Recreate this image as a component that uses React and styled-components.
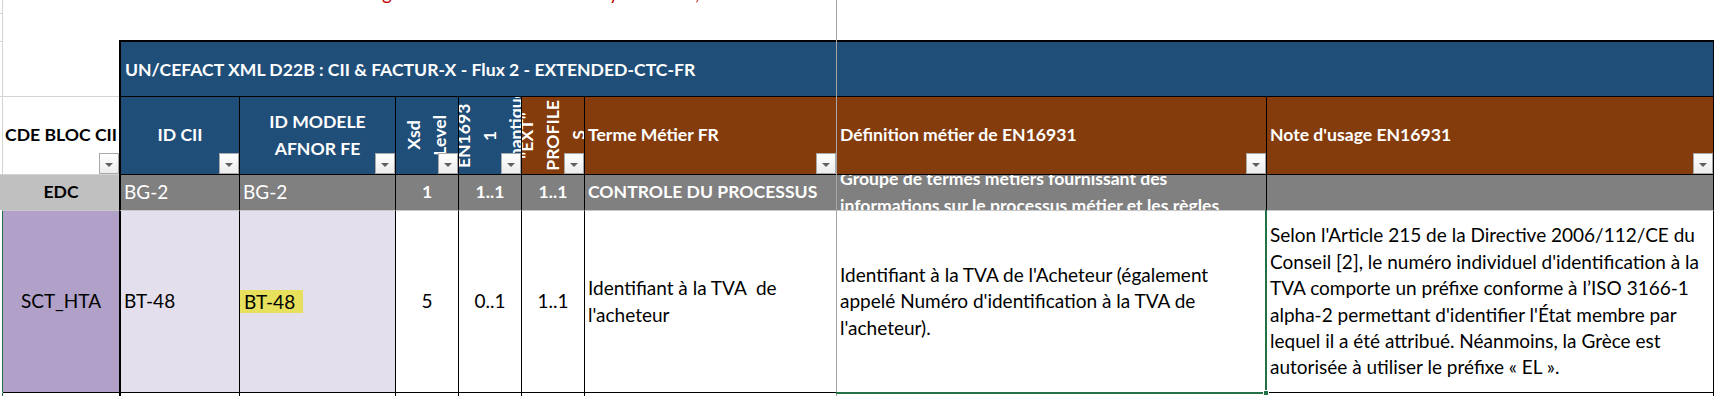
import React from 'react';
import styled, { createGlobalStyle } from 'styled-components';

const FONT = 'Lato, "Liberation Sans", sans-serif';
const BLUE = '#1f4e78';
const BROWN = '#843c0c';
const GREY = '#808080';
const LIGHTGREY = '#c0c0c0';
const LAVENDER = '#e4dfec';
const PURPLE = '#b1a0c7';
const XLGREEN = '#217346';
const REG = '19px';
const BOLD = '17.6px';

const GlobalStyle = createGlobalStyle`
  html, body { margin: 0; padding: 0; background: #fff; }
  body { font-family: ${FONT}; }
  *, *::before, *::after { box-sizing: border-box; }
`;

const Sheet = styled.div`
  position: relative;
  width: 1714px;
  height: 396px;
  overflow: hidden;
  display: grid;
  grid-template-columns: 3px 116px 120px 156px 63px 63px 63px 252px 430px 448px;
  grid-template-rows: 40px 56px 78px 36px 182px 4px;
  font-family: ${FONT};
  font-size: ${REG};
  color: #000;
`;

const Gutter = styled.div`
  grid-row: span 3;
  border-right: 1px solid #d4d4d4;
  background:
    linear-gradient(#d4d4d4, #d4d4d4) 0 13px / 100% 1px no-repeat,
    linear-gradient(#d4d4d4, #d4d4d4) 0 41px / 100% 1px no-repeat,
    linear-gradient(#d4d4d4, #d4d4d4) 0 96px / 100% 1px no-repeat;
`;

const GutterCell = styled.div`
  background: ${p => p.$bg || '#fff'};
  border-top: 1px solid ${p => p.$top || 'transparent'};
  border-right: 1px solid ${p => p.$line || 'transparent'};
`;

const TopStrip = styled.div`
  grid-column: span 9;
  display: flex;
  align-items: flex-start;
  overflow: hidden;
`;

const RedClip = styled.div`
  display: flex;
  height: 4px;
  overflow: hidden;
  color: #c00000;
  font-size: 19px;
  line-height: 19px;
`;

const RedGlyph = styled.span`
  flex: none;
  width: 10px;
  margin-left: ${p => p.$gap}px;
  margin-top: -17px;
  display: block;
`;

const Blank = styled.div`
  background: #fff;
`;

const TitleBand = styled.div`
  grid-column: span 8;
  background: ${BLUE};
  border-top: 2px solid #000;
  border-left: 2px solid #000;
  border-right: 1px solid #000;
  display: flex;
  align-items: center;
  padding-left: 4px;
  color: #fff;
  font-weight: 700;
  font-size: ${BOLD};
  white-space: nowrap;
`;

const HeadCell = styled.div`
  position: relative;
  overflow: hidden;
  background: ${p => p.$bg || '#fff'};
  color: ${p => (p.$bg ? '#fff' : '#000')};
  font-weight: 700;
  font-size: ${BOLD};
  border-top: 1px solid ${p => (p.$bg ? '#000' : '#d4d4d4')};
  border-left: ${p => (p.$bg ? `${p.$thick ? 2 : 1}px solid #000` : 'none')};
  border-right: ${p => (p.$last ? '1px solid #000' : 'none')};
  display: flex;
  align-items: center;
  justify-content: ${p => (p.$left ? 'flex-start' : 'center')};
  text-align: ${p => (p.$left ? 'left' : 'center')};
  padding: 0 3px;
  line-height: 26.4px;
  white-space: nowrap;
`;

const Rotated = styled.div`
  flex: none;
  writing-mode: vertical-rl;
  transform: rotate(180deg);
  text-align: center;
  line-height: 26px;
  white-space: pre;
`;

const FilterButton = styled.span`
  position: absolute;
  right: 0;
  bottom: 0;
  width: 20px;
  height: 21px;
  background: linear-gradient(#ffffff, #ececec);
  border: 1px solid #a8a8a8;
  display: flex;
  align-items: center;
  justify-content: center;
  z-index: 1;
  &::after {
    content: '';
    margin-top: 2px;
    border-left: 4px solid transparent;
    border-right: 4px solid transparent;
    border-top: 4px solid #5f5f5f;
  }
`;

const Cell = styled.div`
  position: relative;
  overflow: ${p => (p.$visible ? 'visible' : 'hidden')};
  background: ${p => p.$bg || '#fff'};
  color: ${p => p.$color || '#000'};
  font-weight: ${p => (p.$bold ? 700 : 400)};
  font-size: ${p => (p.$bold ? BOLD : REG)};
  border-top: 1px solid ${p => p.$top || '#000'};
  border-left: ${p => (p.$noLeft ? 'none' : `${p.$thick ? 2 : 1}px solid #000`)};
  border-right: ${p => (p.$last ? '1px solid #000' : 'none')};
  display: flex;
  align-items: center;
  justify-content: ${p => (p.$center ? 'center' : 'flex-start')};
  text-align: ${p => (p.$center ? 'center' : 'left')};
  padding: 0 3px;
  line-height: 26.4px;
  white-space: nowrap;
`;

const Lines = styled.div`
  flex: none;
`;

const Highlight = styled.span`
  background: #e6e05c;
  margin-left: -3px;
  padding: 0 8px 0 4px;
  line-height: 23px;
  display: inline-block;
`;

const Selection = styled.div`
  position: absolute;
  top: -1px;
  left: -1px;
  right: -1px;
  bottom: -2px;
  border-right: 2px solid ${XLGREEN};
  border-bottom: 2px solid ${XLGREEN};
  pointer-events: none;
  z-index: 3;
  &::after {
    content: '';
    position: absolute;
    right: -4px;
    bottom: -4px;
    width: 6px;
    height: 6px;
    background: ${XLGREEN};
    border: 1px solid #fff;
  }
`;

const FreezeLine = styled.div`
  position: absolute;
  left: 836px;
  top: 0;
  width: 1px;
  height: 396px;
  background: #a6a6a6;
  z-index: 2;
`;

const br = (lines) =>
  lines.map((l, i) => (
    <React.Fragment key={i}>
      {l}
      {i < lines.length - 1 && <br />}
    </React.Fragment>
  ));

export default function App() {
  return (
    <>
      <GlobalStyle />
      <Sheet>
        <Gutter />
        <TopStrip>
          <RedClip>
            <RedGlyph $gap={379}>g</RedGlyph>
            <RedGlyph $gap={217}>y</RedGlyph>
            <RedGlyph $gap={76}>,</RedGlyph>
          </RedClip>
        </TopStrip>

        <Blank />
        <TitleBand>UN/CEFACT XML D22B : CII &amp; FACTUR-X - Flux 2 - EXTENDED-CTC-FR</TitleBand>

        <HeadCell>
          CDE BLOC CII
          <FilterButton />
        </HeadCell>
        <HeadCell $bg={BLUE} $thick>
          ID CII
          <FilterButton />
        </HeadCell>
        <HeadCell $bg={BLUE}>
          {br(['ID MODELE', 'AFNOR FE'])}
          <FilterButton />
        </HeadCell>
        <HeadCell $bg={BLUE}>
          <Rotated>{'Xsd\nLevel'}</Rotated>
          <FilterButton />
        </HeadCell>
        <HeadCell $bg={BLUE}>
          <Rotated>{'EN1693\n1\nSémantique'}</Rotated>
          <FilterButton />
        </HeadCell>
        <HeadCell $bg={BROWN}>
          <Rotated>{'"EXT"\nPROFILE\nS'}</Rotated>
          <FilterButton />
        </HeadCell>
        <HeadCell $bg={BROWN} $left>
          Terme Métier FR
          <FilterButton />
        </HeadCell>
        <HeadCell $bg={BROWN} $left>
          Définition métier de EN16931
          <FilterButton />
        </HeadCell>
        <HeadCell $bg={BROWN} $left $last>
          Note d'usage EN16931
          <FilterButton />
        </HeadCell>

        <GutterCell $bg={LIGHTGREY} $top="#d4d4d4" />
        <Cell $bg={LIGHTGREY} $top="#d4d4d4" $noLeft $center $bold>EDC</Cell>
        <Cell $bg={GREY} $color="#fff" $thick>BG-2</Cell>
        <Cell $bg={GREY} $color="#fff">BG-2</Cell>
        <Cell $bg={GREY} $color="#fff" $center $bold>1</Cell>
        <Cell $bg={GREY} $color="#fff" $center $bold>1..1</Cell>
        <Cell $bg={GREY} $color="#fff" $center $bold>1..1</Cell>
        <Cell $bg={GREY} $color="#fff" $bold>CONTROLE DU PROCESSUS</Cell>
        <Cell $bg={GREY} $color="#fff" $bold>
          <Lines>
            {br([
              'Groupe de termes métiers fournissant des',
              'informations sur le processus métier et les règles',
            ])}
          </Lines>
        </Cell>
        <Cell $bg={GREY} $last />

        <GutterCell $line={XLGREEN} />
        <Cell $bg={PURPLE} $top="#c8c8c8" $noLeft $center>SCT_HTA</Cell>
        <Cell $bg={LAVENDER} $top="#c8c8c8" $thick>BT-48</Cell>
        <Cell $bg={LAVENDER} $top="#c8c8c8">
          <Highlight>BT-48</Highlight>
        </Cell>
        <Cell $top="#c8c8c8" $center>5</Cell>
        <Cell $top="#c8c8c8" $center>0..1</Cell>
        <Cell $top="#c8c8c8" $center>1..1</Cell>
        <Cell $top="#c8c8c8">
          <Lines>{br(['Identifiant à la TVA\u00a0 de', "l'acheteur"])}</Lines>
        </Cell>
        <Cell $top="#c8c8c8" $visible>
          <Lines>
            {br([
              "Identifiant à la TVA de l'Acheteur (également",
              "appelé Numéro d'identification à la TVA de",
              "l'acheteur).",
            ])}
          </Lines>
          <Selection />
        </Cell>
        <Cell $top="#c8c8c8" $last>
          <Lines>
            {br([
              "Selon l'Article 215 de la Directive 2006/112/CE du",
              "Conseil [2], le numéro individuel d'identification à la",
              'TVA comporte un préfixe conforme à l’ISO 3166-1',
              "alpha-2 permettant d'identifier l'État membre par",
              'lequel il a été attribué. Néanmoins, la Grèce est',
              'autorisée à utiliser le préfixe « EL ».',
            ])}
          </Lines>
        </Cell>

        <GutterCell $line={XLGREEN} />
        <Cell $top="#000" $noLeft />
        <Cell $thick />
        <Cell />
        <Cell />
        <Cell />
        <Cell />
        <Cell />
        <Cell />
        <Cell $last />

        <FreezeLine />
      </Sheet>
    </>
  );
}
